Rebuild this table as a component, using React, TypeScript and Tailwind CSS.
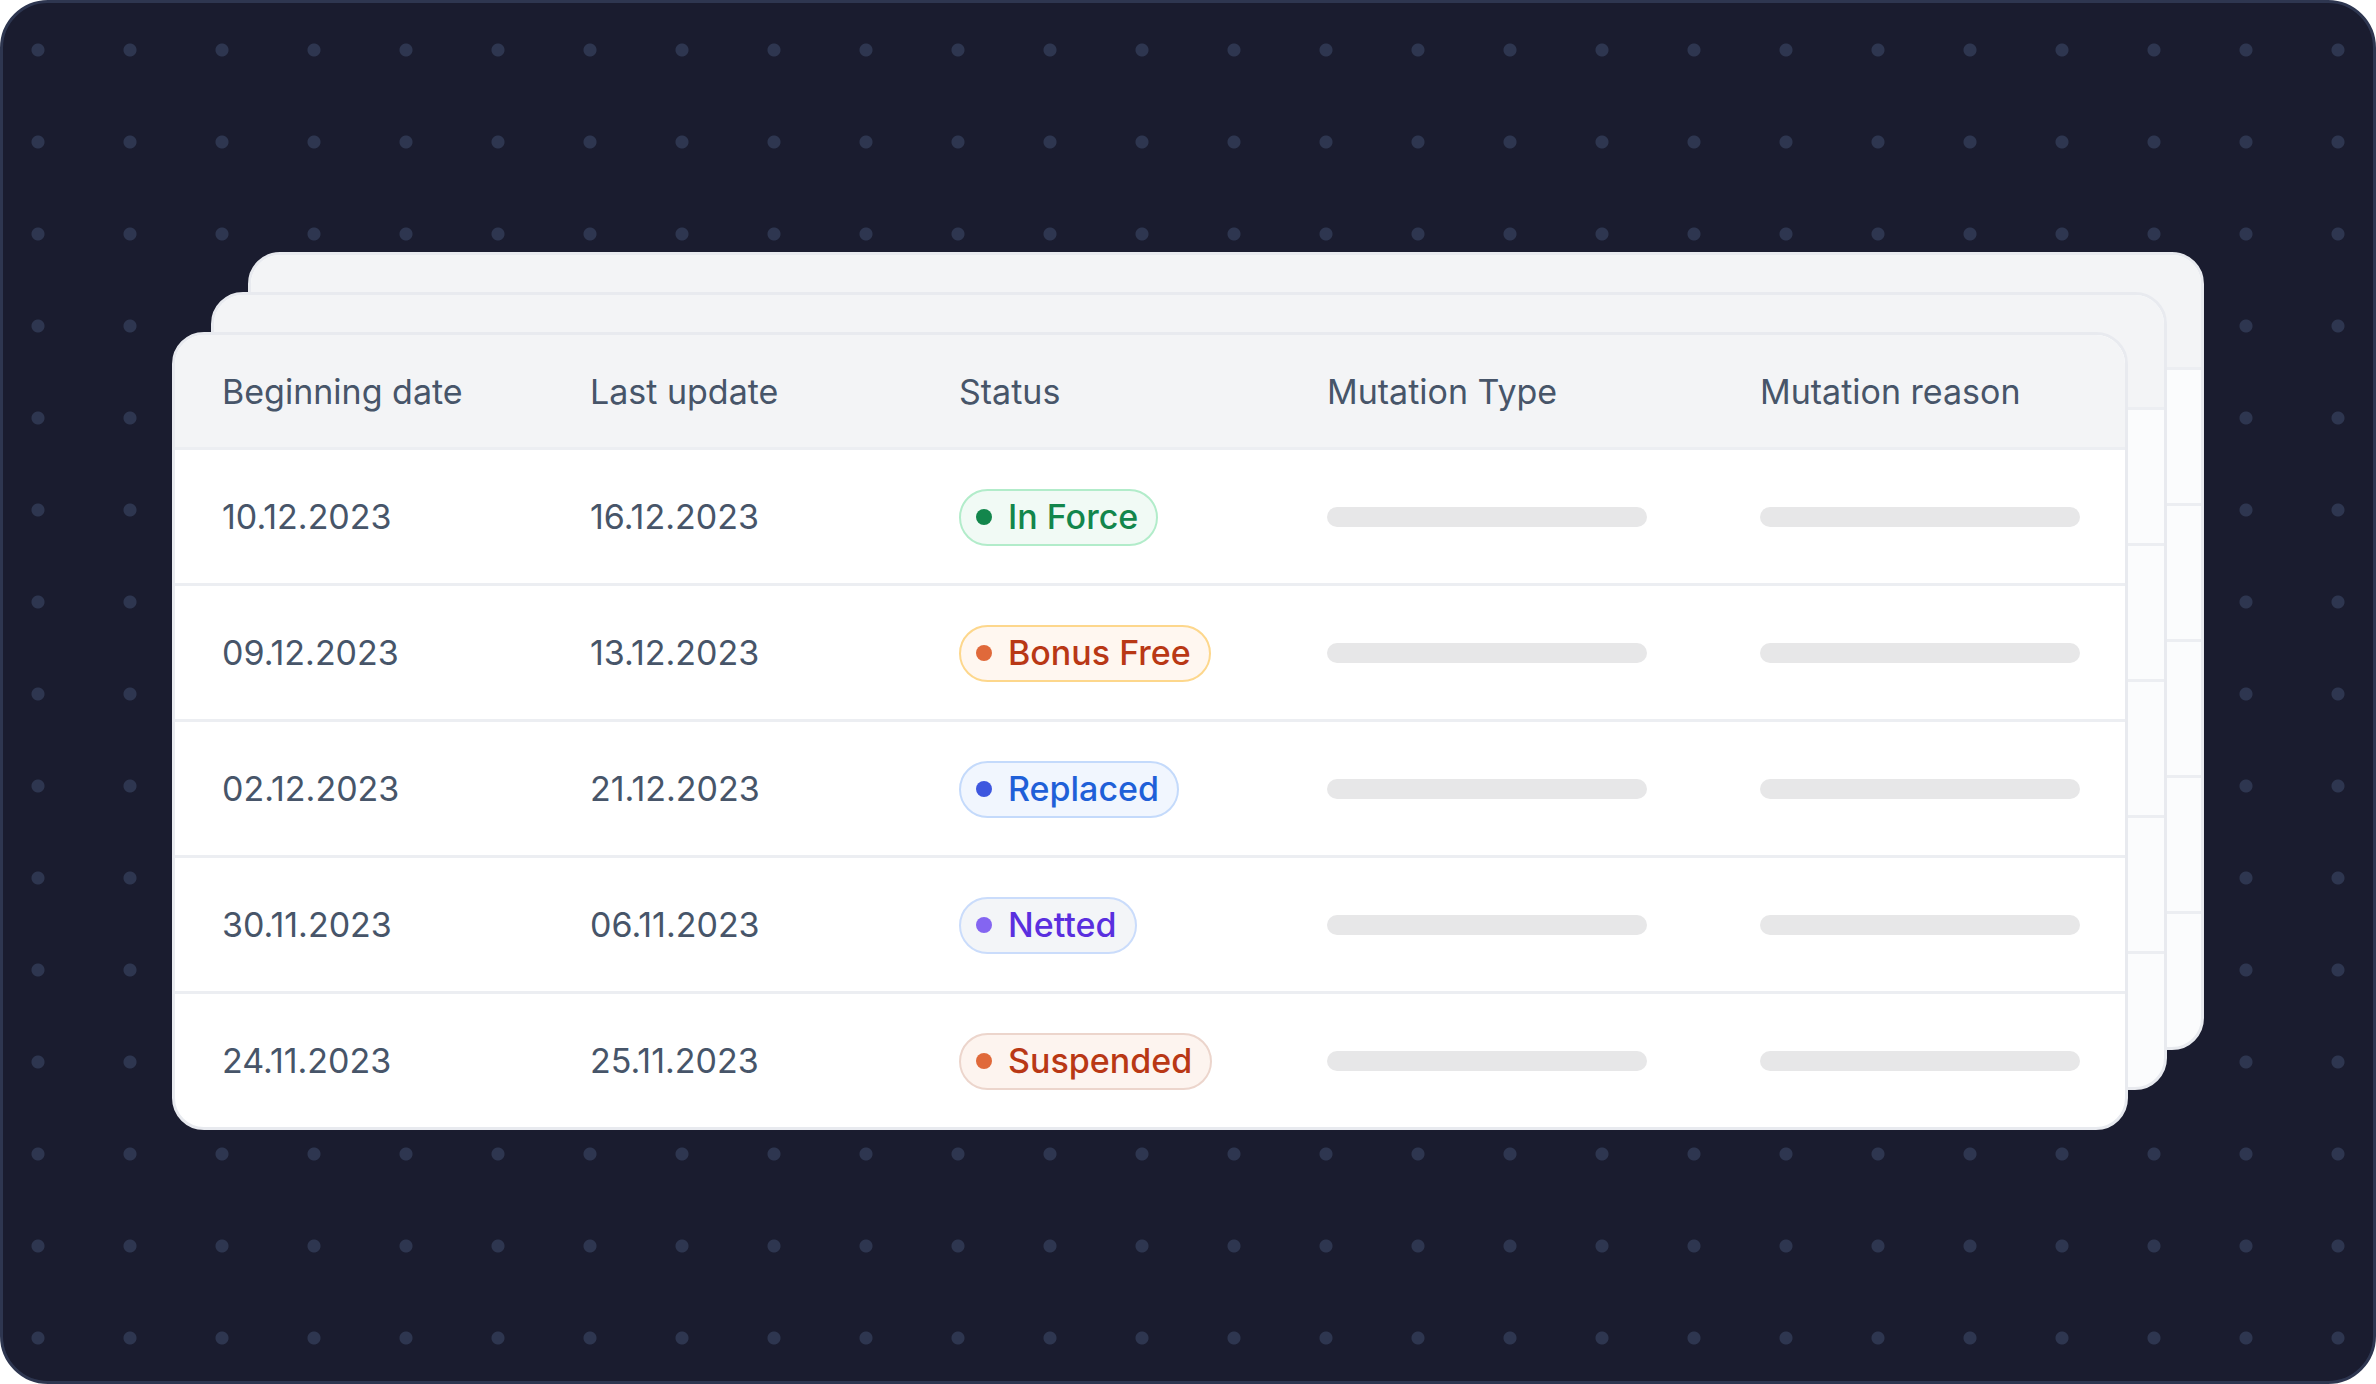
import React from 'react';

type Status = {
  label: string;
  box: string;
  dot: string;
  text: string;
};

const statuses: Record<string, Status> = {
  force: { label: 'In Force', box: 'bg-[#f1faf5] border-[#b2ecca]', dot: 'bg-[#13864c]', text: 'text-[#13864c]' },
  bonus: { label: 'Bonus Free', box: 'bg-[#fff7f0] border-[#fdd78c]', dot: 'bg-[#e0693a]', text: 'text-[#b93815]' },
  replaced: { label: 'Replaced', box: 'bg-[#f1f6fe] border-[#c4dafb]', dot: 'bg-[#3e57df]', text: 'text-[#1f60d8]' },
  netted: { label: 'Netted', box: 'bg-[#f3f5f8] border-[#cadcfb]', dot: 'bg-[#8465f1]', text: 'text-[#5a2fdf]' },
  suspended: { label: 'Suspended', box: 'bg-[#fdf4ef] border-[#ecd5cc]', dot: 'bg-[#e0693a]', text: 'text-[#b93815]' },
};

const rows = [
  { start: '10.12.2023', update: '16.12.2023', status: 'force' },
  { start: '09.12.2023', update: '13.12.2023', status: 'bonus' },
  { start: '02.12.2023', update: '21.12.2023', status: 'replaced' },
  { start: '30.11.2023', update: '06.11.2023', status: 'netted' },
  { start: '24.11.2023', update: '25.11.2023', status: 'suspended' },
];

const headers = ['Beginning date', 'Last update', 'Status', 'Mutation Type', 'Mutation reason'];

const cols = 'grid grid-cols-[368px_369px_368px_433px_1fr] items-center pl-[47px] pr-[45px]';

const Badge = ({ s }: { s: Status }) => (
  <span className={`inline-flex items-center h-[57px] rounded-full border-2 pl-[15px] pr-[18px] gap-[16px] ${s.box}`}>
    <span className={`w-4 h-4 rounded-full ${s.dot}`} />
    <span className={`text-[34px] font-medium leading-none ${s.text}`}>{s.label}</span>
  </span>
);

const Bar = () => <div className="w-[320px] h-[20px] rounded-full bg-[#e7e7e8]" />;

const Table = () => (
  <div className="w-[1956px] h-[798px] rounded-[32px] border-[3px] border-[#e8eaef] bg-white overflow-hidden col-start-1 row-start-1 mt-[80px] text-[#475569]">
    <div className={`${cols} h-[112px] bg-[#f3f4f6] text-[34px]`}>
      {headers.map((h) => (
        <span key={h}>{h}</span>
      ))}
    </div>
    {rows.map((r) => (
      <div key={r.start} className={`${cols} h-[136px] border-t-[3px] border-[#eceef2] text-[34px]`}>
        <span>{r.start}</span>
        <span>{r.update}</span>
        <div>
          <Badge s={statuses[r.status]} />
        </div>
        <Bar />
        <Bar />
      </div>
    ))}
  </div>
);

const BackCard = ({ className }: { className: string }) => (
  <div className={`w-[1956px] h-[798px] rounded-[32px] border-[3px] border-[#e8eaef] bg-[#fbfcfd] overflow-hidden col-start-1 row-start-1 ${className}`}>
    <div className="h-[112px] bg-[#f3f4f6]" />
    {rows.map((r) => (
      <div key={r.start} className="h-[136px] border-t-[3px] border-[#eceef2]" />
    ))}
  </div>
);

export default function App() {
  return (
    <div className="w-[2376px] h-[1384px] bg-white font-['Inter',sans-serif]">
      <div className="w-full h-full rounded-[48px] border-[3px] border-[#2e3650] bg-[#1a1c2f] bg-[radial-gradient(circle,#2e3650_6px,transparent_7px)] bg-[length:92px_92px] bg-[position:-11px_1px] pt-[249px] pl-[169px]">
        <div className="grid items-start justify-items-start">
          <BackCard className="ml-[76px]" />
          <BackCard className="ml-[39px] mt-[40px]" />
          <Table />
        </div>
      </div>
    </div>
  );
}
